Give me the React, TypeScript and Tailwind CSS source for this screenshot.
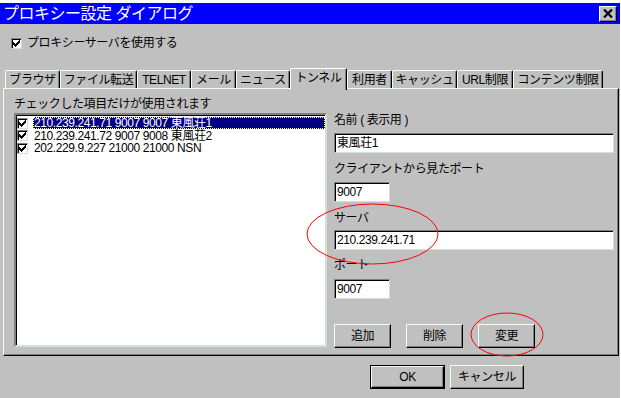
import type { ReactNode } from 'react';

const TABS = [
  { label: 'ブラウザ', w: 'w-[55px]' },
  { label: 'ファイル転送', w: 'w-[77px]' },
  { label: 'TELNET', w: 'w-[54px]' },
  { label: 'メール', w: 'w-[45px]' },
  { label: 'ニュース', w: 'w-[54px]' },
  { label: 'トンネル', w: 'w-[57px]', active: true },
  { label: '利用者', w: 'w-[45px]' },
  { label: 'キャッシュ', w: 'w-[65px]' },
  { label: 'URL制限', w: 'w-[56px]' },
  { label: 'コンテンツ制限', w: 'w-[90px]' },
];

const ROWS = [
  '210.239.241.71 9007 9007 東風荘1',
  '210.239.241.72 9007 9008 東風荘2',
  '202.229.9.227 21000 21000 NSN',
];

const RAISED = 'bg-[#c0c0c0] border border-t-[#f0fff0] border-l-[#f0fff0] border-r-black border-b-black shadow-[inset_-1px_-1px_0_#808080]';
const SUNKEN = 'bg-white border border-t-[#808080] border-l-[#808080] border-r-[#cfe4cf] border-b-[#cfe4cf] shadow-[inset_1px_1px_0_#000]';

function Check() {
  return (
    <span className={`flex h-[11px] w-[11px] shrink-0 items-center justify-center ${SUNKEN}`}>
      <svg width="7" height="7" viewBox="0 0 7 7" shapeRendering="crispEdges">
        <path d="M0 2h1v3H0zM1 3h1v3H1zM2 4h1v3H2zM3 3h1v3H3zM4 2h1v3H4zM5 1h1v3H5zM6 0h1v3H6z" fill="#000" />
      </svg>
    </span>
  );
}

function Field({ value, wide }: { value: string; wide?: boolean }) {
  return (
    <div className={`flex h-[20px] items-center pl-[2px] text-[12px] text-black ${wide ? 'w-[280px]' : 'w-[56px]'} ${SUNKEN}`}>
      {value}
    </div>
  );
}

function Btn({ children, className = '' }: { children: ReactNode; className?: string }) {
  return (
    <button type="button" className={`flex h-[24px] w-[57px] items-center justify-center text-[12px] text-black ${RAISED} ${className}`}>
      {children}
    </button>
  );
}

export default function App() {
  return (
    <div className="relative flex h-[398px] w-[621px] flex-col overflow-hidden border-r border-r-white bg-[#c0c0c0] font-['Liberation_Sans','Noto_Sans_CJK_JP',sans-serif] text-[12px] tracking-[-0.4px] text-black">
      <div className="h-[3px] bg-white" />
      <div className="flex h-[21px] items-center justify-between bg-[#0000ff] pl-[3px] pr-[3px]">
        <span className="text-[16px] leading-[21px] tracking-[-0.5px] text-white">プロキシー設定 ダイアログ</span>
        <span className={`flex h-[16px] w-[18px] items-center justify-center ${RAISED}`}>
          <svg width="10" height="9" viewBox="0 0 10 9">
            <path d="M1 0.5 L9 8.5 M9 0.5 L1 8.5" stroke="#000" strokeWidth="2.2" />
          </svg>
        </span>
      </div>

      <div className="flex flex-col px-[3px]">
        <label className="mt-[13px] flex h-[12px] items-center gap-[5px] pl-[8px] leading-[12px]">
          <Check />
          <span>プロキシーサーバを使用する</span>
        </label>

        <div className="mt-[19px] flex h-[20px] items-end pl-[2px]">
          {TABS.map((t) =>
            t.active ? (
              <div key={t.label} className={`relative z-10 -mb-[2px] flex h-[22px] items-center justify-center rounded-t-[2px] border-l border-t border-r border-l-white border-t-white border-r-black bg-[#c0c0c0] pb-[3px] shadow-[inset_-1px_0_0_#808080] ${t.w}`}>
                {t.label}
              </div>
            ) : (
              <div key={t.label} className={`flex h-[18px] items-center justify-center rounded-t-[2px] border-l border-t border-r border-l-[#f0fff0] border-t-[#f0fff0] border-r-black shadow-[inset_-1px_0_0_#808080] ${t.w}`}>
                {t.label}
              </div>
            ),
          )}
        </div>

        <div className="flex h-[268px] w-[616px] border border-t-[#f0fff0] border-l-[#f0fff0] border-r-black border-b-black shadow-[inset_-1px_-1px_0_#808080]">
          <div className="flex w-[323px] flex-col pl-[10px] pt-[8px]">
            <div className="h-[14px] leading-[14px]">チェックした項目だけが使用されます</div>
            <div className={`mt-[2px] flex h-[234px] w-[313px] flex-col pt-[2px] pl-[1px] border-2 ${SUNKEN}`}>
              {ROWS.map((r, i) => (
                <div key={r} className="flex h-[12.5px] items-center gap-[5px] leading-[12px]">
                  <Check />
                  <span className={i === 0 ? 'flex h-[12px] flex-1 items-center bg-[#000080] pl-[1px] text-white outline outline-1 -outline-offset-1 outline-dotted outline-[#ffff9a]' : 'pl-[1px]'}>
                    {r}
                  </span>
                </div>
              ))}
            </div>
          </div>

          <div className="ml-[7px] flex w-[280px] flex-col pt-[24px]">
            <div className="h-[14px] leading-[14px]">名前 ( 表示用 )</div>
            <div className="mt-[6px]"><Field value="東風荘1" wide /></div>
            <div className="mt-[9px] h-[14px] leading-[14px]">クライアントから見たポート</div>
            <div className="mt-[6px]"><Field value="9007" /></div>
            <div className="mt-[9px] h-[14px] leading-[14px]">サーバ</div>
            <div className="mt-[5px]"><Field value="210.239.241.71" wide /></div>
            <div className="mt-[8px] h-[14px] leading-[14px]">ポート</div>
            <div className="mt-[7px]"><Field value="9007" /></div>
            <div className="mt-[25px] flex gap-[15px]">
              <Btn>追加</Btn>
              <Btn>削除</Btn>
              <Btn>変更</Btn>
            </div>
          </div>
        </div>

        <div className="mt-[9px] flex gap-[5px] pl-[367px]">
          <button type="button" className="flex h-[24px] w-[75px] items-center justify-center border border-black">
            <span className={`flex h-full w-full items-center justify-center ${RAISED}`}>OK</span>
          </button>
          <Btn className="w-[74px]">キャンセル</Btn>
        </div>
      </div>

      <svg className="pointer-events-none absolute left-0 top-0" width="621" height="398">
        <ellipse cx="372.5" cy="234" rx="65.5" ry="30" fill="none" stroke="#ff0000" strokeWidth="1" />
        <ellipse cx="507" cy="334.5" rx="36" ry="21.5" fill="none" stroke="#ff0000" strokeWidth="1" />
      </svg>
    </div>
  );
}
